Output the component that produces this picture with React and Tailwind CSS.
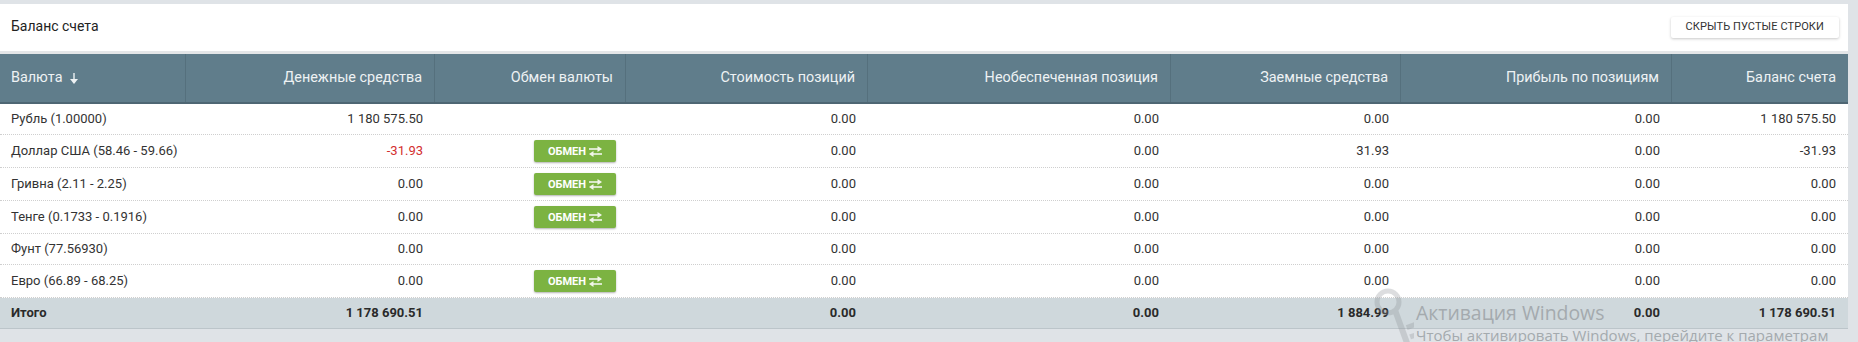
import React from "react";

const COLS = "grid grid-cols-[186px_249px_191px_242px_303px_230px_271px_176px]";

const rows = [
  { name: "Рубль (1.00000)", cash: "1 180 575.50", btn: false, pos: "0.00", unsec: "0.00", loan: "0.00", profit: "0.00", bal: "1 180 575.50" },
  { name: "Доллар США (58.46 - 59.66)", cash: "-31.93", red: true, btn: true, pos: "0.00", unsec: "0.00", loan: "31.93", profit: "0.00", bal: "-31.93" },
  { name: "Гривна (2.11 - 2.25)", cash: "0.00", btn: true, pos: "0.00", unsec: "0.00", loan: "0.00", profit: "0.00", bal: "0.00" },
  { name: "Тенге (0.1733 - 0.1916)", cash: "0.00", btn: true, pos: "0.00", unsec: "0.00", loan: "0.00", profit: "0.00", bal: "0.00" },
  { name: "Фунт (77.56930)", cash: "0.00", btn: false, pos: "0.00", unsec: "0.00", loan: "0.00", profit: "0.00", bal: "0.00" },
  { name: "Евро (66.89 - 68.25)", cash: "0.00", btn: true, pos: "0.00", unsec: "0.00", loan: "0.00", profit: "0.00", bal: "0.00" },
];

function SortArrow() {
  return (
    <svg width="8" height="11" viewBox="0 0 8 11" className="ml-[7px]">
      <rect x="3.3" y="0" width="1.4" height="7" fill="#eef2f4" />
      <polygon points="0,6 8,6 4,11" fill="#eef2f4" />
    </svg>
  );
}

function ExchangeIcon() {
  return (
    <svg width="13" height="11" viewBox="0 0 13 11" className="ml-[3px]">
      <rect x="0" y="2.2" width="9.5" height="1.6" fill="#f1f6ea" />
      <polygon points="8.5,0 13,3 8.5,6" fill="#f1f6ea" />
      <rect x="3.5" y="7.2" width="9.5" height="1.6" fill="#f1f6ea" />
      <polygon points="4.5,5 0,8 4.5,11" fill="#f1f6ea" />
    </svg>
  );
}

function ExchangeButton() {
  return (
    <div className="flex justify-end">
      <div className="w-[82px] h-[22px] bg-[#7cb342] rounded-[2px] shadow-[0_1px_2px_rgba(0,0,0,0.3)] flex items-center justify-center text-white text-[11px] font-bold leading-none">
        ОБМЕН
        <ExchangeIcon />
      </div>
    </div>
  );
}

function HeadCell({ children, left, last }) {
  return (
    <div
      className={
        "h-full flex items-center px-3 " +
        (left ? "justify-start pl-[11px] " : "justify-end ") +
        (last ? "" : "border-r border-[#55707d]")
      }
    >
      {children}
    </div>
  );
}

export default function App() {
  return (
    <div className="relative w-[1858px] h-[342px] bg-[#dfe3e7] pt-[4px] font-[Roboto,sans-serif] overflow-hidden">
      <div className="w-[1848px] bg-white">
        <div className="h-[50px] flex items-center justify-between pl-[11px] pr-[9px] border-b-[3px] border-[#e4e6e8]">
          <div className="text-[14px] text-[#222] mt-[-2px]">Баланс счета</div>
          <div className="h-[21px] px-[15px] flex items-center bg-white shadow-[0_1px_3px_rgba(0,0,0,0.22)] rounded-[2px] text-[11px] text-[#333] uppercase tracking-[0.1px]">
            Скрыть пустые строки
          </div>
        </div>

        <div className={COLS + " h-[50px] bg-[#607d8b] border-b-2 border-[#4e6673] text-[14.4px] text-[#eef2f4]"}>
          <HeadCell left>
            Валюта
            <SortArrow />
          </HeadCell>
          <HeadCell>Денежные средства</HeadCell>
          <HeadCell>Обмен валюты</HeadCell>
          <HeadCell>Стоимость позиций</HeadCell>
          <HeadCell>Необеспеченная позиция</HeadCell>
          <HeadCell>Заемные средства</HeadCell>
          <HeadCell>Прибыль по позициям</HeadCell>
          <HeadCell last>Баланс счета</HeadCell>
        </div>

        {rows.map((r, i) => (
          <div
            key={i}
            className={COLS + " items-center text-[13px] leading-[20px] text-[#333] border-b border-dotted border-[#cfcfcf] py-[5px]"}
          >
            <div className="pl-[11px]">{r.name}</div>
            <div className={"text-right pr-3 " + (r.red ? "text-[#d32f2f]" : "")}>{r.cash}</div>
            <div className="pr-[10px]">{r.btn ? <ExchangeButton /> : null}</div>
            <div className="text-right pr-3">{r.pos}</div>
            <div className="text-right pr-3">{r.unsec}</div>
            <div className="text-right pr-3">{r.loan}</div>
            <div className="text-right pr-3">{r.profit}</div>
            <div className="text-right pr-3">{r.bal}</div>
          </div>
        ))}

        <div className={COLS + " h-[31px] items-center bg-[#cfd8dc] border-b border-[#bcc5ca] text-[13px] font-bold text-[#2a2a2a]"}>
          <div className="pl-[11px]">Итого</div>
          <div className="text-right pr-3">1 178 690.51</div>
          <div></div>
          <div className="text-right pr-3">0.00</div>
          <div className="text-right pr-3">0.00</div>
          <div className="text-right pr-3">1 884.99</div>
          <div className="text-right pr-3">0.00</div>
          <div className="text-right pr-3">1 178 690.51</div>
        </div>
      </div>

      {/* Windows activation watermark overlay */}
      <div className="absolute left-[1370px] top-[288px] pointer-events-none">
        <svg width="44" height="60" viewBox="0 0 44 60" className="absolute left-0 top-0 opacity-30">
          <circle cx="18" cy="14" r="11" fill="none" stroke="#8d9296" strokeWidth="5" />
          <rect x="22" y="22" width="6" height="38" transform="rotate(-20 25 22)" fill="#8d9296" />
          <rect x="30" y="40" width="10" height="5" transform="rotate(-20 25 22)" fill="#8d9296" />
          <rect x="30" y="50" width="8" height="5" transform="rotate(-20 25 22)" fill="#8d9296" />
        </svg>
        <div className="absolute left-[46px] top-[12px] whitespace-nowrap font-['Open_Sans',sans-serif] text-[19.4px] leading-[26px] text-[#a4aaae]">
          Активация Windows
        </div>
        <div className="absolute left-[46px] top-[37px] whitespace-nowrap font-['Open_Sans',sans-serif] text-[15px] leading-[20px] text-[#a4aaae]">
          Чтобы активировать Windows, перейдите к параметрам
        </div>
      </div>
    </div>
  );
}
